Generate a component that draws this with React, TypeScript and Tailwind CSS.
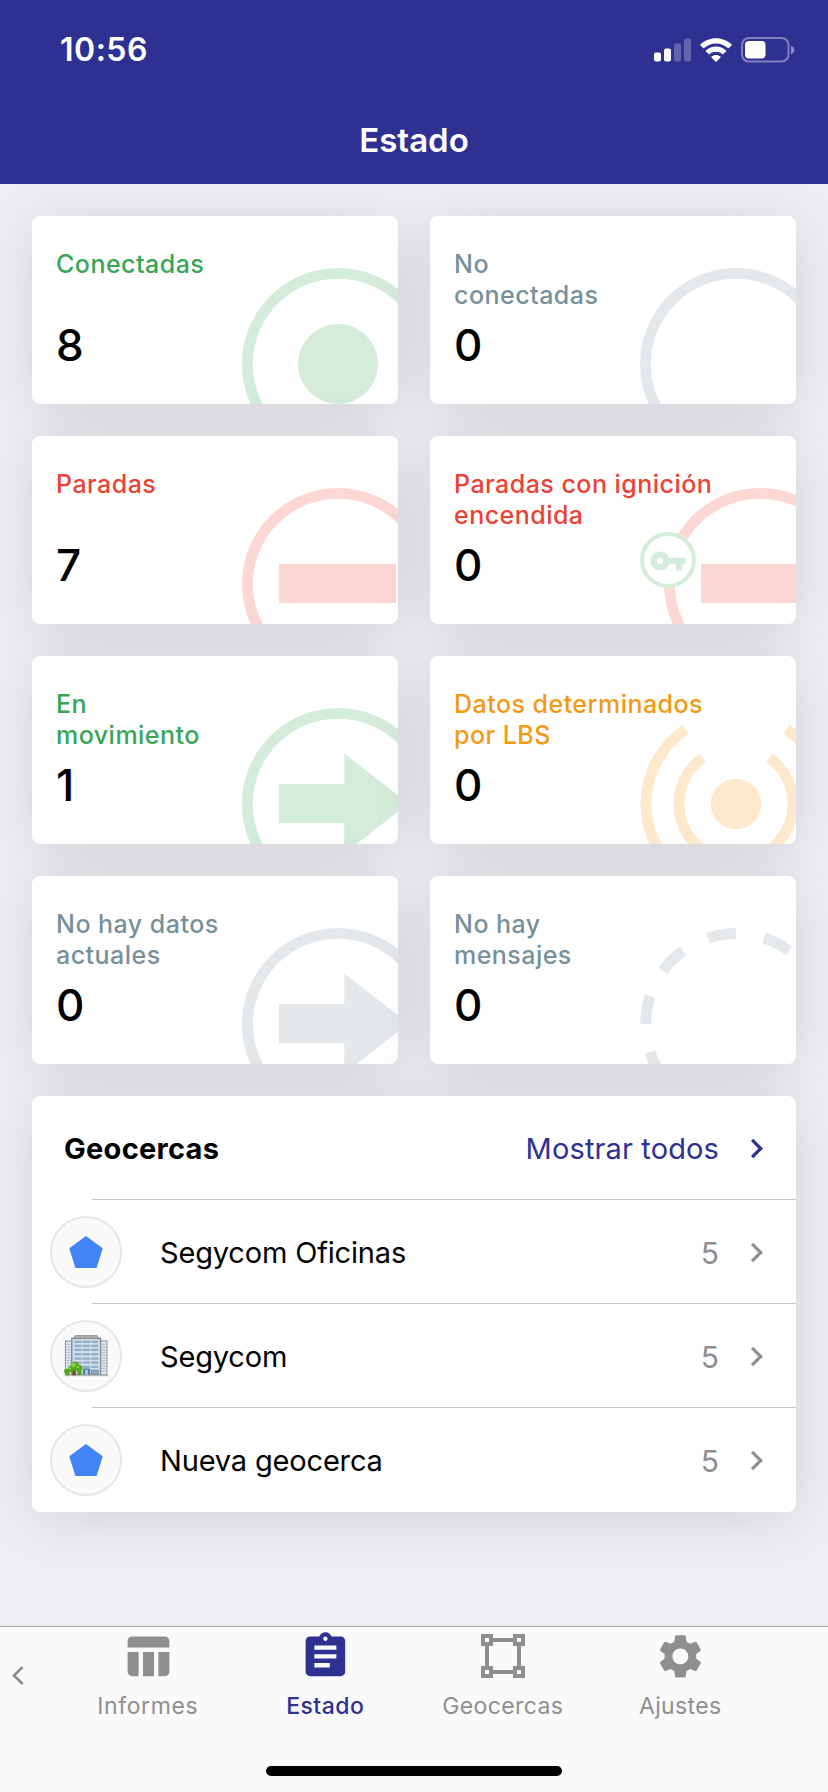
import React from "react";
import { MdAssignment, MdChevronRight, MdSettings, MdTableChart, MdVpnKey } from "react-icons/md";

type ArtKind = "dot" | "ring" | "stop" | "ignition" | "arrow" | "signal" | "dashed";

interface StatusCard {
  title: string;
  value: number;
  art: ArtKind;
  titleColor: string;
  artColor: string;
}

const GREEN = "text-[#38a557]";
const RED = "text-[#ea4335]";
const GRAY = "text-[#78909c]";
const ORANGE = "text-[#f29a14]";

const CARDS: StatusCard[] = [
  { title: "Conectadas", value: 8, art: "dot", titleColor: GREEN, artColor: "text-[#d5ecdb]" },
  { title: "No\nconectadas", value: 0, art: "ring", titleColor: GRAY, artColor: "text-[#e4e8ea]" },
  { title: "Paradas", value: 7, art: "stop", titleColor: RED, artColor: "text-[#fdd7d4]" },
  { title: "Paradas con ignición\nencendida", value: 0, art: "ignition", titleColor: RED, artColor: "text-[#fdd7d4]" },
  { title: "En\nmovimiento", value: 1, art: "arrow", titleColor: GREEN, artColor: "text-[#d5ecdb]" },
  { title: "Datos determinados\npor LBS", value: 0, art: "signal", titleColor: ORANGE, artColor: "text-[#fee8ce]" },
  { title: "No hay datos\nactuales", value: 0, art: "arrow", titleColor: GRAY, artColor: "text-[#e4e8ea]" },
  { title: "No hay\nmensajes", value: 0, art: "dashed", titleColor: GRAY, artColor: "text-[#e4e8ea]" },
];

const GEOFENCES = [
  { name: "Segycom Oficinas", count: 5, icon: "pentagon" },
  { name: "Segycom", count: 5, icon: "building" },
  { name: "Nueva geocerca", count: 5, icon: "pentagon" },
];

function Ring() {
  return <circle cx="96" cy="96" r="90.6" fill="none" stroke="currentColor" strokeWidth="10.8" />;
}

function ArtShapes({ kind }: { kind: ArtKind }) {
  switch (kind) {
    case "dot":
      return (
        <>
          <Ring />
          <circle cx="96" cy="96" r="40" fill="currentColor" />
        </>
      );
    case "ring":
      return <Ring />;
    case "stop":
    case "ignition":
      return (
        <>
          <Ring />
          <rect x="37" y="76" width="117" height="39" fill="currentColor" />
        </>
      );
    case "arrow":
      return (
        <>
          <Ring />
          <path d="M37 76H102.3V45.5L166.6 95.5L102.3 145.5V115H37Z" fill="currentColor" />
        </>
      );
    case "signal":
      return (
        <g fill="none" stroke="currentColor" strokeWidth="11">
          <path d="M45.7 21.4A90 90 0 0 0 45.7 170.6M146.3 21.4A90 90 0 0 1 146.3 170.6" />
          <path d="M62.5 49.9A57 57 0 1 0 129.5 49.9" />
          <circle cx="96" cy="96" r="25.3" fill="currentColor" stroke="none" />
        </g>
      );
    case "dashed":
      return (
        <circle cx="96" cy="96" r="90.4" fill="none" stroke="currentColor" strokeWidth="11" pathLength={20} strokeDasharray="1 1" />
      );
  }
}

function CardArt({ kind, color }: { kind: ArtKind; color: string }) {
  const shifted = kind === "ignition";
  return (
    <>
      <svg
        viewBox="0 0 192 192"
        className={`absolute top-[52px] size-[192px] ${shifted ? "left-[234px]" : "left-[210px]"} ${color}`}
      >
        <ArtShapes kind={kind} />
      </svg>
      {shifted && (
        <div className="absolute left-[210px] top-[96px] flex size-[56px] items-center justify-center rounded-full border-4 border-[#d5ecdb] bg-white text-[#d5ecdb]">
          <MdVpnKey className="mt-[2px] size-[38px]" />
        </div>
      )}
    </>
  );
}

function StatusTile({ card }: { card: StatusCard }) {
  return (
    <div className="relative h-[188px] overflow-hidden rounded-lg bg-white px-6 pt-[33px] shadow-[0_7px_60px_rgba(0,0,0,0.12)]">
      <CardArt kind={card.art} color={card.artColor} />
      <div className={`relative h-[62px] whitespace-pre text-[25px] font-medium leading-[31px] tracking-[0.47px] ${card.titleColor}`}>
        {card.title}
      </div>
      <div className="relative mt-[8px] text-[44px] font-medium leading-[52px] text-black">{card.value}</div>
    </div>
  );
}

function Building() {
  const rows = [17, 29, 41, 54, 67, 79, 92];
  return (
    <svg viewBox="0 0 131 124" className="h-[41.5px] w-[44px]">
      <rect x="4" y="18" width="20" height="101" fill="#e4edf5" stroke="#8b8d90" strokeWidth="3" />
      <rect x="108" y="18" width="20" height="101" fill="#e4edf5" stroke="#8b8d90" strokeWidth="3" />
      {[26, 34, 42, 50, 58, 66, 74, 82, 90, 98, 106].map((y) => (
        <g key={y} fill="#a9c1d6">
          <rect x="8" y={y} width="12" height="4" />
          <rect x="112" y={y} width="12" height="4" />
        </g>
      ))}
      <rect x="23" y="10" width="86" height="109" fill="#d3e0eb" stroke="#85878a" strokeWidth="4" />
      <path d="M34 1H98L105 11H27Z" fill="#a9abad" stroke="#7f8184" strokeWidth="2" />
      {rows.map((y) => (
        <g key={y} fill="#8fb0c9">
          <rect x="31" y={y} width="21" height="7" />
          <rect x="55" y={y} width="23" height="7" />
          <rect x="81" y={y} width="21" height="7" />
        </g>
      ))}
      <rect x="56" y="100" width="22" height="19" fill="#5f7f99" />
      <rect x="63" y="104" width="8" height="15" fill="#a9cbe4" />
      <rect x="82" y="105" width="20" height="12" fill="#86aac6" stroke="#5f7f99" strokeWidth="2" />
      <rect x="2" y="119" width="129" height="4" fill="#b7b8ba" />
      <path d="M26 104H34L36 120H24Z" fill="#7d4a20" />
      <g fill="#4fa51f">
        <circle cx="32" cy="93" r="13" />
        <circle cx="44" cy="99" r="10" />
        <circle cx="20" cy="102" r="9" />
        <circle cx="7" cy="108" r="7" />
        <circle cx="10" cy="114" r="7" />
        <circle cx="46" cy="113" r="7" />
      </g>
      <g fill="#86d043">
        <circle cx="28" cy="90" r="7" />
        <circle cx="41" cy="96" r="4" />
        <circle cx="17" cy="100" r="4" />
      </g>
    </svg>
  );
}

function Pentagon() {
  return (
    <svg viewBox="0 0 34 32" className="h-[32px] w-[34px] text-[#4285f4]">
      <path d="M17 0L33.7 12.2L27.6 32H6.4L0.3 12.2Z" fill="currentColor" />
    </svg>
  );
}

function StatusBar() {
  return (
    <div className="flex h-[98px] items-center justify-between pl-[60px] pr-[33px]">
      <span className="pt-[2px] text-[32px] font-semibold leading-none tracking-[0.5px]">10:56</span>
      <div className="flex items-center pt-px">
        <svg viewBox="0 0 37 24" className="h-[24px] w-[37px]" fill="white">
          <rect x="0" y="14.5" width="7" height="9" rx="2" />
          <rect x="10" y="10.5" width="7" height="13" rx="2" />
          <rect x="20" y="5.5" width="7" height="18" rx="2" opacity=".25" />
          <rect x="30" y="0.5" width="7" height="23" rx="2" opacity=".25" />
        </svg>
        <svg viewBox="0 0 32 24" className="ml-[9.5px] h-[24px] w-[32px]" fill="white">
          <path d="M16 0.2C22 0.2 27.4 2.5 31.5 6.3Q32 6.9 31.5 7.4L28.9 10.1Q28.4 10.5 27.8 10.1C24.6 7.2 20.5 5.5 16 5.5C11.5 5.5 7.4 7.2 4.2 10.1Q3.6 10.5 3.1 10.1L0.5 7.4Q0 6.9 0.5 6.3C4.6 2.5 10 0.2 16 0.2Z" />
          <path d="M16 8.6C19.8 8.6 23.3 10 26 12.4Q26.5 12.9 26 13.4L23.3 16Q22.8 16.4 22.3 16C20.6 14.6 18.4 13.8 16 13.8C13.6 13.8 11.4 14.6 9.7 16Q9.2 16.4 8.7 16L6 13.4Q5.5 12.9 6 12.4C8.7 10 12.2 8.6 16 8.6Z" />
          <path d="M16 17C17.7 17 19.3 17.6 20.5 18.6Q21 19.1 20.5 19.6L16.6 23.5Q16 24 15.4 23.5L11.5 19.6Q11 19.1 11.5 18.6C12.7 17.6 14.3 17 16 17Z" />
        </svg>
        <svg viewBox="0 0 54 26" className="ml-[9px] h-[26px] w-[54px]">
          <rect x="1" y="1" width="46.5" height="23.6" rx="7" fill="none" stroke="white" strokeOpacity=".4" strokeWidth="2" />
          <rect x="4" y="4" width="20.5" height="17.6" rx="4" fill="white" />
          <path d="M50 8.8C52 9.4 53.3 11 53.3 13S52 16.6 50 17.2Z" fill="white" fillOpacity=".45" />
        </svg>
      </div>
    </div>
  );
}

function VertexFrame() {
  return (
    <svg viewBox="0 0 24 24" className="my-[2.4px] ml-px size-[48px]" fill="currentColor">
      <path d="M23 7V1h-6v2H7V1H1v6h2v10H1v6h6v-2h10v2h6v-6h-2V7h2zM3 3h2v2H3V3zm2 18H3v-2h2v2zm12-2H7v-2H5V7h2V5h10v2h2v10h-2v2zm4 2h-2v-2h2v2zM19 5V3h2v2h-2z" />
    </svg>
  );
}

const TABS = [
  { label: "Informes", icon: <MdTableChart className="size-[52.8px]" />, style: "text-[#8f8f92] tracking-[0.6px]" },
  { label: "Estado", icon: <MdAssignment className="size-[52.8px]" />, style: "text-[#2e3092] font-medium tracking-[0.44px]" },
  { label: "Geocercas", icon: <VertexFrame />, style: "text-[#8f8f92] tracking-[0.38px]" },
  { label: "Ajustes", icon: <MdSettings className="size-[52.8px]" />, style: "text-[#8f8f92] tracking-[0.38px]" },
];

export default function App() {
  return (
    <div className="flex h-[1792px] w-[828px] flex-col overflow-hidden bg-[#efeef4] font-['Inter',sans-serif]">
      <header className="relative z-10 h-[184px] shrink-0 bg-[#2e3092] text-white">
        <StatusBar />
        <h1 className="flex h-[84px] items-center justify-center text-[33px] font-semibold leading-none">Estado</h1>
      </header>

      <main className="flex-1 px-8 pt-8">
        <div className="grid grid-cols-2 gap-8">
          {CARDS.map((card) => (
            <StatusTile key={card.title} card={card} />
          ))}
        </div>

        <section className="relative mt-8 overflow-hidden rounded-lg bg-white text-[29px] leading-[36px] shadow-[0_7px_60px_rgba(0,0,0,0.12)]">
          <div className="flex h-[103px] items-center pl-8 pr-[20px] pt-px">
            <h2 className="flex-1 pt-[2px] font-bold tracking-[0.28px]">Geocercas</h2>
            <span className="pt-[2px] tracking-[0.13px] text-[#2e3092]">Mostrar todos</span>
            <MdChevronRight className="ml-[18px] size-[39px] text-[#2e3092]" />
          </div>
          {GEOFENCES.map((g) => (
            <React.Fragment key={g.name}>
              <div className="ml-[60px] h-px bg-[#c6c5c9]" />
              <div className="flex h-[103px] items-center pl-[18px] pr-[20px] pt-px">
                <div className="flex size-[72px] items-center justify-center rounded-full border-2 border-[#e6e6e6] bg-[#fafafa]">
                  {g.icon === "building" ? <Building /> : <Pentagon />}
                </div>
                <span className="ml-[38px] flex-1 pt-[2px] tracking-[-0.17px] text-black">{g.name}</span>
                <span className="pt-[2px] text-[30px] text-[#8f8f8f]">{g.count}</span>
                <MdChevronRight className="ml-[18px] size-[39px] text-[#8f8f8f]" />
              </div>
            </React.Fragment>
          ))}
          <div className="h-px" />
        </section>
      </main>

      <footer className="relative flex h-[166px] shrink-0 flex-col border-t border-[#aaaaae] bg-[#fafafa]">
        <div className="flex h-[139px]">
          <div className="w-[59px] pl-[12px] pt-[39px]">
            <svg viewBox="0 0 12 19" className="h-[19px] w-[12px]" fill="none" stroke="#8c8c8c" strokeWidth="2.6">
              <path d="M10.6 1L2 9.5L10.6 18" />
            </svg>
          </div>
          <nav className="grid flex-1 grid-cols-4">
            {TABS.map((tab) => (
              <div key={tab.label} className={`flex flex-col items-center pt-[3px] text-[23px] leading-[28px] ${tab.style}`}>
                {tab.icon}
                <span className="mt-[9px]">{tab.label}</span>
              </div>
            ))}
          </nav>
          <div className="w-[59px]" />
        </div>
        <div className="mx-auto h-[10px] w-[296px] rounded-full bg-black" />
      </footer>
    </div>
  );
}
